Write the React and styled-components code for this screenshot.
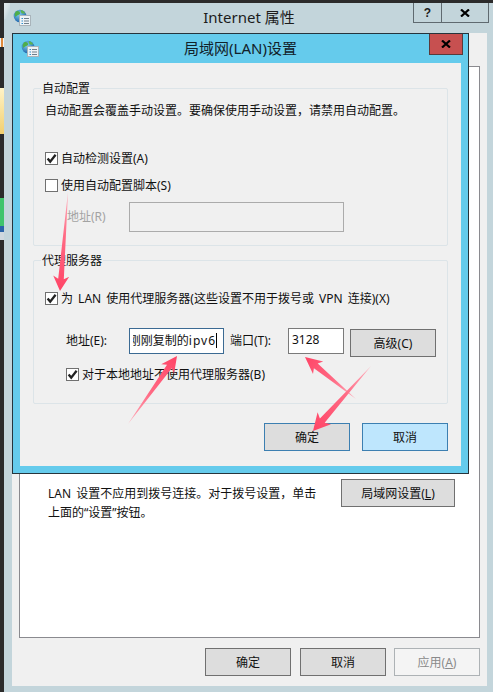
import React from "react";
import styled, { createGlobalStyle } from "styled-components";

const Global = createGlobalStyle`
  html, body { margin: 0; padding: 0; background: #2b2b2b; }
  * { box-sizing: border-box; }
`;

const FONT = `"Noto Sans", "Noto Sans CJK SC", sans-serif`;

const Page = styled.div`
  position: relative;
  width: 493px;
  height: 692px;
  overflow: hidden;
  padding: 3px 0 0 4px;
  background: #2b2b2b;
  font-family: ${FONT};
  font-size: 12px;
  color: #111;
`;

const Outer = styled.div`
  width: 489px;
  height: 689px;
  padding: 0 6px 6px 8px;
  background: #c3d5db;
  display: flex;
  flex-direction: column;
`;

const OuterTitle = styled.div`
  position: relative;
  height: 30px;
  flex: none;
  display: flex;
  align-items: center;
  justify-content: center;
  font-size: 15px;
  color: #1c1c1c;
  padding: 0 1px 3px 0;
`;

const IconSlot = styled.div`
  position: absolute;
  left: ${(p) => p.$left}px;
  top: ${(p) => p.$top}px;
  line-height: 0;
`;

const Controls = styled.div`
  position: absolute;
  right: -2px;
  top: 0;
  height: 20px;
  display: flex;
  border: 1px solid #5f6a70;
  border-top: none;
`;

const Ctl = styled.div`
  width: ${(p) => p.$w}px;
  display: flex;
  align-items: center;
  justify-content: center;
  font: bold 12px "Liberation Sans", sans-serif;
  border-left: ${(p) => (p.$sep ? "1px solid #5f6a70" : "none")};
`;

const OuterBody = styled.div`
  flex: 1;
  background: #f0f0f0;
  padding: 33px 7px 10px 7px;
  display: flex;
  flex-direction: column;
`;

const Panel = styled.div`
  height: 572px;
  width: 461px;
  flex: none;
  background: #fff;
  border: 1px solid #8a8a8f;
  padding: 412px 24px 0 28px;
  display: flex;
  justify-content: space-between;
`;

const Note = styled.div`
  width: 272px;
  line-height: 19px;
  padding-top: 5px;
  word-spacing: 2px;
`;

const Button = styled.div`
  width: ${(p) => p.$w || 86}px;
  height: 28px;
  flex: none;
  display: flex;
  align-items: center;
  justify-content: center;
  margin-top: ${(p) => p.$mt || 0}px;
  margin-right: ${(p) => p.$mr || 0}px;
  background: ${(p) => (p.$hot ? "#bee6fd" : p.$off ? "#f4f4f4" : "#dddddd")};
  border: 1px solid ${(p) => (p.$blue ? "#3c7fb1" : p.$off ? "#adb2b5" : "#707070")};
  color: ${(p) => (p.$off ? "#8a8a8a" : "#111")};
`;

const U = styled.span`
  text-decoration: underline;
  text-underline-offset: 1px;
`;

const Footer = styled.div`
  display: flex;
  justify-content: flex-end;
  gap: 8px;
  padding: 10px 0 0;
`;

const Dialog = styled.div`
  position: absolute;
  left: 12px;
  top: 33px;
  width: 457px;
  height: 441px;
  background: #65cbec;
  border: 1px solid #26343c;
  padding: 0 7px 7px 7px;
  display: flex;
  flex-direction: column;
`;

const DialogTitle = styled.div`
  position: relative;
  height: 29px;
  flex: none;
  display: flex;
  align-items: center;
  justify-content: center;
  font-size: 15px;
  color: #12222a;
  padding-bottom: 2px;
`;

const Close = styled.div`
  position: absolute;
  right: -2px;
  top: 0;
  width: 34px;
  height: 21px;
  background: #c75050;
  border: 1px solid #5a3a3a;
  border-top: none;
  display: flex;
  align-items: center;
  justify-content: center;
  font: bold 12px "Liberation Sans", sans-serif;
  color: #000;
`;

const DialogBody = styled.div`
  flex: 1;
  background: #f0f0f0;
  padding: 25px 13px 0;
  display: flex;
  flex-direction: column;
`;

const Group = styled.div`
  position: relative;
  height: ${(p) => p.$h}px;
  margin-bottom: ${(p) => p.$mb || 0}px;
  flex: none;
  border: 1px solid #dce4e8;
  border-radius: 2px;
  padding: ${(p) => p.$pt}px 11px 0;
`;

const Legend = styled.div`
  position: absolute;
  left: 7px;
  top: -8px;
  padding: 0 1px;
  background: #f0f0f0;
  line-height: 15px;
  white-space: nowrap;
`;

const Paragraph = styled.div`
  line-height: 16px;
  white-space: nowrap;
`;

const CheckRow = styled.div`
  display: flex;
  align-items: center;
  height: 16px;
  gap: 3px;
  white-space: nowrap;
  word-spacing: 2px;
  margin-top: ${(p) => p.$mt || 0}px;
  margin-left: ${(p) => p.$ml || 0}px;
`;

const Box = styled.div`
  width: 13px;
  height: 13px;
  flex: none;
  background: #fff;
  border: 1px solid #707070;
  display: flex;
  align-items: center;
  justify-content: center;
`;

const FieldRow = styled.div`
  display: flex;
  align-items: flex-start;
  margin-top: ${(p) => p.$mt || 0}px;
  margin-left: ${(p) => p.$ml || 0}px;
  white-space: nowrap;
`;

const FieldLabel = styled.div`
  width: ${(p) => p.$w}px;
  padding-left: ${(p) => p.$pl || 0}px;
  line-height: ${(p) => p.$lh}px;
  flex: none;
  color: ${(p) => (p.$off ? "#a3a3a3" : "#111")};
`;

const DisabledInput = styled.div`
  width: 215px;
  height: 30px;
  background: #f0f0f0;
  border: 1px solid #ababab;
`;

const AddressInput = styled.div`
  width: 95px;
  height: 26px;
  flex: none;
  background: #fff;
  border: 1px solid #3b6a93;
  display: flex;
  align-items: center;
  justify-content: flex-end;
  padding: 0 6px 2px 3px;
`;

const AddressClip = styled.div`
  flex: 1;
  min-width: 0;
  display: flex;
  justify-content: flex-end;
  overflow: hidden;
  white-space: nowrap;
`;

const Latin = styled.span`
  letter-spacing: 1px;
`;

const Caret = styled.span`
  width: 1px;
  height: 15px;
  background: #000;
  flex: none;
`;

const PortInput = styled.div`
  width: 56px;
  height: 26px;
  flex: none;
  background: #fff;
  border: 1px solid #7a7a7a;
  padding: 0 0 3px 3px;
  display: flex;
  align-items: center;
  margin-right: 6px;
`;

const DialogFooter = styled.div`
  display: flex;
  justify-content: flex-end;
  gap: 12px;
  padding: 19px 0 0;
`;

const Overlay = styled.svg`
  position: absolute;
  left: 0;
  top: 0;
  pointer-events: none;
`;

const Strip = styled.div`
  position: absolute;
  left: 0;
  top: ${(p) => p.$top}px;
  width: 4px;
  height: ${(p) => p.$h}px;
  background: ${(p) => p.$c};
`;

const Glare = styled.div`
  position: absolute;
  left: 4px;
  top: 3px;
  width: 6px;
  height: 16px;
  background: linear-gradient(115deg, #e6ecee 0%, #d5e1e5 45%, rgba(195, 213, 219, 0) 75%);
`;

const Check = () => (
  <svg width="11" height="11" viewBox="0 0 11 11">
    <path d="M1.6 5.6 L4.2 8.6 L9.6 1.8" fill="none" stroke="#222" strokeWidth="2.3" />
  </svg>
);

const CheckBox = ({ on }) => <Box>{on ? <Check /> : null}</Box>;

const CloseGlyph = () => (
  <svg width="10" height="8" viewBox="0 0 10 8">
    <path d="M1 0.5 L9 7.5 M9 0.5 L1 7.5" stroke="#000" strokeWidth="2.2" fill="none" />
  </svg>
);

const GlobeIcon = () => (
  <svg width="18" height="18" viewBox="0 0 18 18">
    <defs>
      <radialGradient id="gl" cx="40%" cy="35%" r="70%">
        <stop offset="0" stopColor="#7fd0f0" />
        <stop offset="1" stopColor="#1a5fa8" />
      </radialGradient>
    </defs>
    <circle cx="7" cy="7" r="6.3" fill="url(#gl)" />
    <path d="M3 2.5 C5 1.5 7.5 2.5 7 5 C5.5 6.5 3.5 6 2.5 8 C1.2 6 1.5 4 3 2.5 Z" fill="#4fae4a" />
    <path d="M8 1 C10 1.3 11.5 2.8 12.2 4.6 L9 4.6 C8 3.5 7.5 2.5 8 1 Z" fill="#5cb54f" />
    <rect x="6.5" y="6.5" width="11" height="10" fill="#eef3f6" stroke="#a9b4ba" />
    <path d="M8.5 9.5 h1.5 M8.5 12 h1.5 M8.5 14.5 h1.5" stroke="#2e8fd0" strokeWidth="1.2" />
    <path d="M11 9.5 h5 M11 12 h5 M11 14.5 h5" stroke="#6f7f8a" strokeWidth="1" />
  </svg>
);

const ARROWS = [
  { id: "a1", tail: [68, 192], tip: [60, 291], len: 15, wing: 8, shaft: 2.8 },
  { id: "a2", tail: [128, 424], tip: [177, 356], len: 16, wing: 8, shaft: 3 },
  { id: "a3", tail: [356, 399], tip: [305, 357], len: 17, wing: 8, shaft: 3 },
  { id: "a4", tail: [371, 366], tip: [313, 431], len: 17, wing: 9, shaft: 3.2 },
];

const arrowPoints = ({ tail, tip, len, wing, shaft }) => {
  const dx = tip[0] - tail[0];
  const dy = tip[1] - tail[1];
  const L = Math.hypot(dx, dy);
  const ux = dx / L;
  const uy = dy / L;
  const nx = -uy;
  const ny = ux;
  const at = (back, side) => [
    tip[0] - ux * back + nx * side,
    tip[1] - uy * back + ny * side,
  ];
  return [
    tail,
    at(len - 3, shaft),
    at(len, wing),
    tip,
    at(len, -wing),
    at(len - 3, -shaft),
  ]
    .map((p) => p.map((v) => v.toFixed(1)).join(","))
    .join(" ");
};

const Arrows = () => (
  <Overlay width="493" height="692" viewBox="0 0 493 692">
    <defs>
      {ARROWS.map((a) => (
        <linearGradient
          key={a.id}
          id={a.id}
          gradientUnits="userSpaceOnUse"
          x1={a.tail[0]}
          y1={a.tail[1]}
          x2={a.tip[0]}
          y2={a.tip[1]}
        >
          <stop offset="0" stopColor="#ffb0bd" />
          <stop offset="0.45" stopColor="#ff6a84" />
          <stop offset="1" stopColor="#ff4466" />
        </linearGradient>
      ))}
    </defs>
    {ARROWS.map((a) => (
      <polygon key={a.id} points={arrowPoints(a)} fill={`url(#${a.id})`} />
    ))}
  </Overlay>
);

export default function App() {
  return (
    <Page>
      <Global />
      <Outer>
        <OuterTitle>
          <IconSlot $left={1} $top={6}>
            <GlobeIcon />
          </IconSlot>
          Internet 属性
          <Controls>
            <Ctl $w={27}>?</Ctl>
            <Ctl $w={47} $sep>
              <CloseGlyph />
            </Ctl>
          </Controls>
        </OuterTitle>
        <OuterBody>
          <Panel>
            <Note>
              LAN 设置不应用到拨号连接。对于拨号设置，单击
              <br />
              上面的“设置”按钮。
            </Note>
            <Button $w={114}>
              局域网设置(<U>L</U>)
            </Button>
          </Panel>
          <Footer>
            <Button $mr={1}>确定</Button>
            <Button>取消</Button>
            <Button $off>
              应用(<U>A</U>)
            </Button>
          </Footer>
        </OuterBody>
      </Outer>
      <Strip $top={38} $h={9} $c="linear-gradient(90deg,#f4f4f4 0 25%,#e08a3c 25% 75%,#f4f4f4 75%)" />
      <Strip $top={88} $h={46} $c="linear-gradient(180deg,#fff4c8,#f2cf6e)" />
      <Strip $top={198} $h={28} $c="#3fc46c" />
      <Strip $top={226} $h={6} $c="#2a64a8" />
      <Strip $top={232} $h={8} $c="#cfd8de" />
      <Glare />
      <Dialog>
        <DialogTitle>
          <IconSlot $left={1} $top={6}>
            <GlobeIcon />
          </IconSlot>
          局域网(LAN)设置
          <Close>
            <CloseGlyph />
          </Close>
        </DialogTitle>
        <DialogBody>
          <Group $h={158} $mb={14} $pt={14}>
            <Legend>自动配置</Legend>
            <Paragraph>自动配置会覆盖手动设置。要确保使用手动设置，请禁用自动配置。</Paragraph>
            <CheckRow $mt={31}>
              <CheckBox on />
              自动检测设置(A)
            </CheckRow>
            <CheckRow $mt={11}>
              <CheckBox />
              使用自动配置脚本(S)
            </CheckRow>
            <FieldRow $mt={9} $ml={22}>
              <FieldLabel $w={62} $lh={30} $off>
                地址(R)
              </FieldLabel>
              <DisabledInput />
            </FieldRow>
          </Group>
          <Group $h={144} $pt={29}>
            <Legend>代理服务器</Legend>
            <CheckRow>
              <CheckBox on />
              为 LAN 使用代理服务器(这些设置不用于拨号或 VPN 连接)(X)
            </CheckRow>
            <FieldRow $mt={22} $ml={21}>
              <FieldLabel $w={63} $lh={26}>
                地址(E):
              </FieldLabel>
              <AddressInput>
                <AddressClip>
                  <span>
                    刚刚复制的<Latin>ipv6</Latin>
                  </span>
                </AddressClip>
                <Caret />
              </AddressInput>
              <FieldLabel $w={64} $lh={26} $pl={6}>
                端口(T):
              </FieldLabel>
              <PortInput>3128</PortInput>
              <Button $mt={1}>高级(C)</Button>
            </FieldRow>
            <CheckRow $mt={9} $ml={21}>
              <CheckBox on />
              对于本地地址不使用代理服务器(B)
            </CheckRow>
          </Group>
          <DialogFooter>
            <Button $blue>确定</Button>
            <Button $blue $hot>
              取消
            </Button>
          </DialogFooter>
        </DialogBody>
      </Dialog>
      <Arrows />
    </Page>
  );
}
